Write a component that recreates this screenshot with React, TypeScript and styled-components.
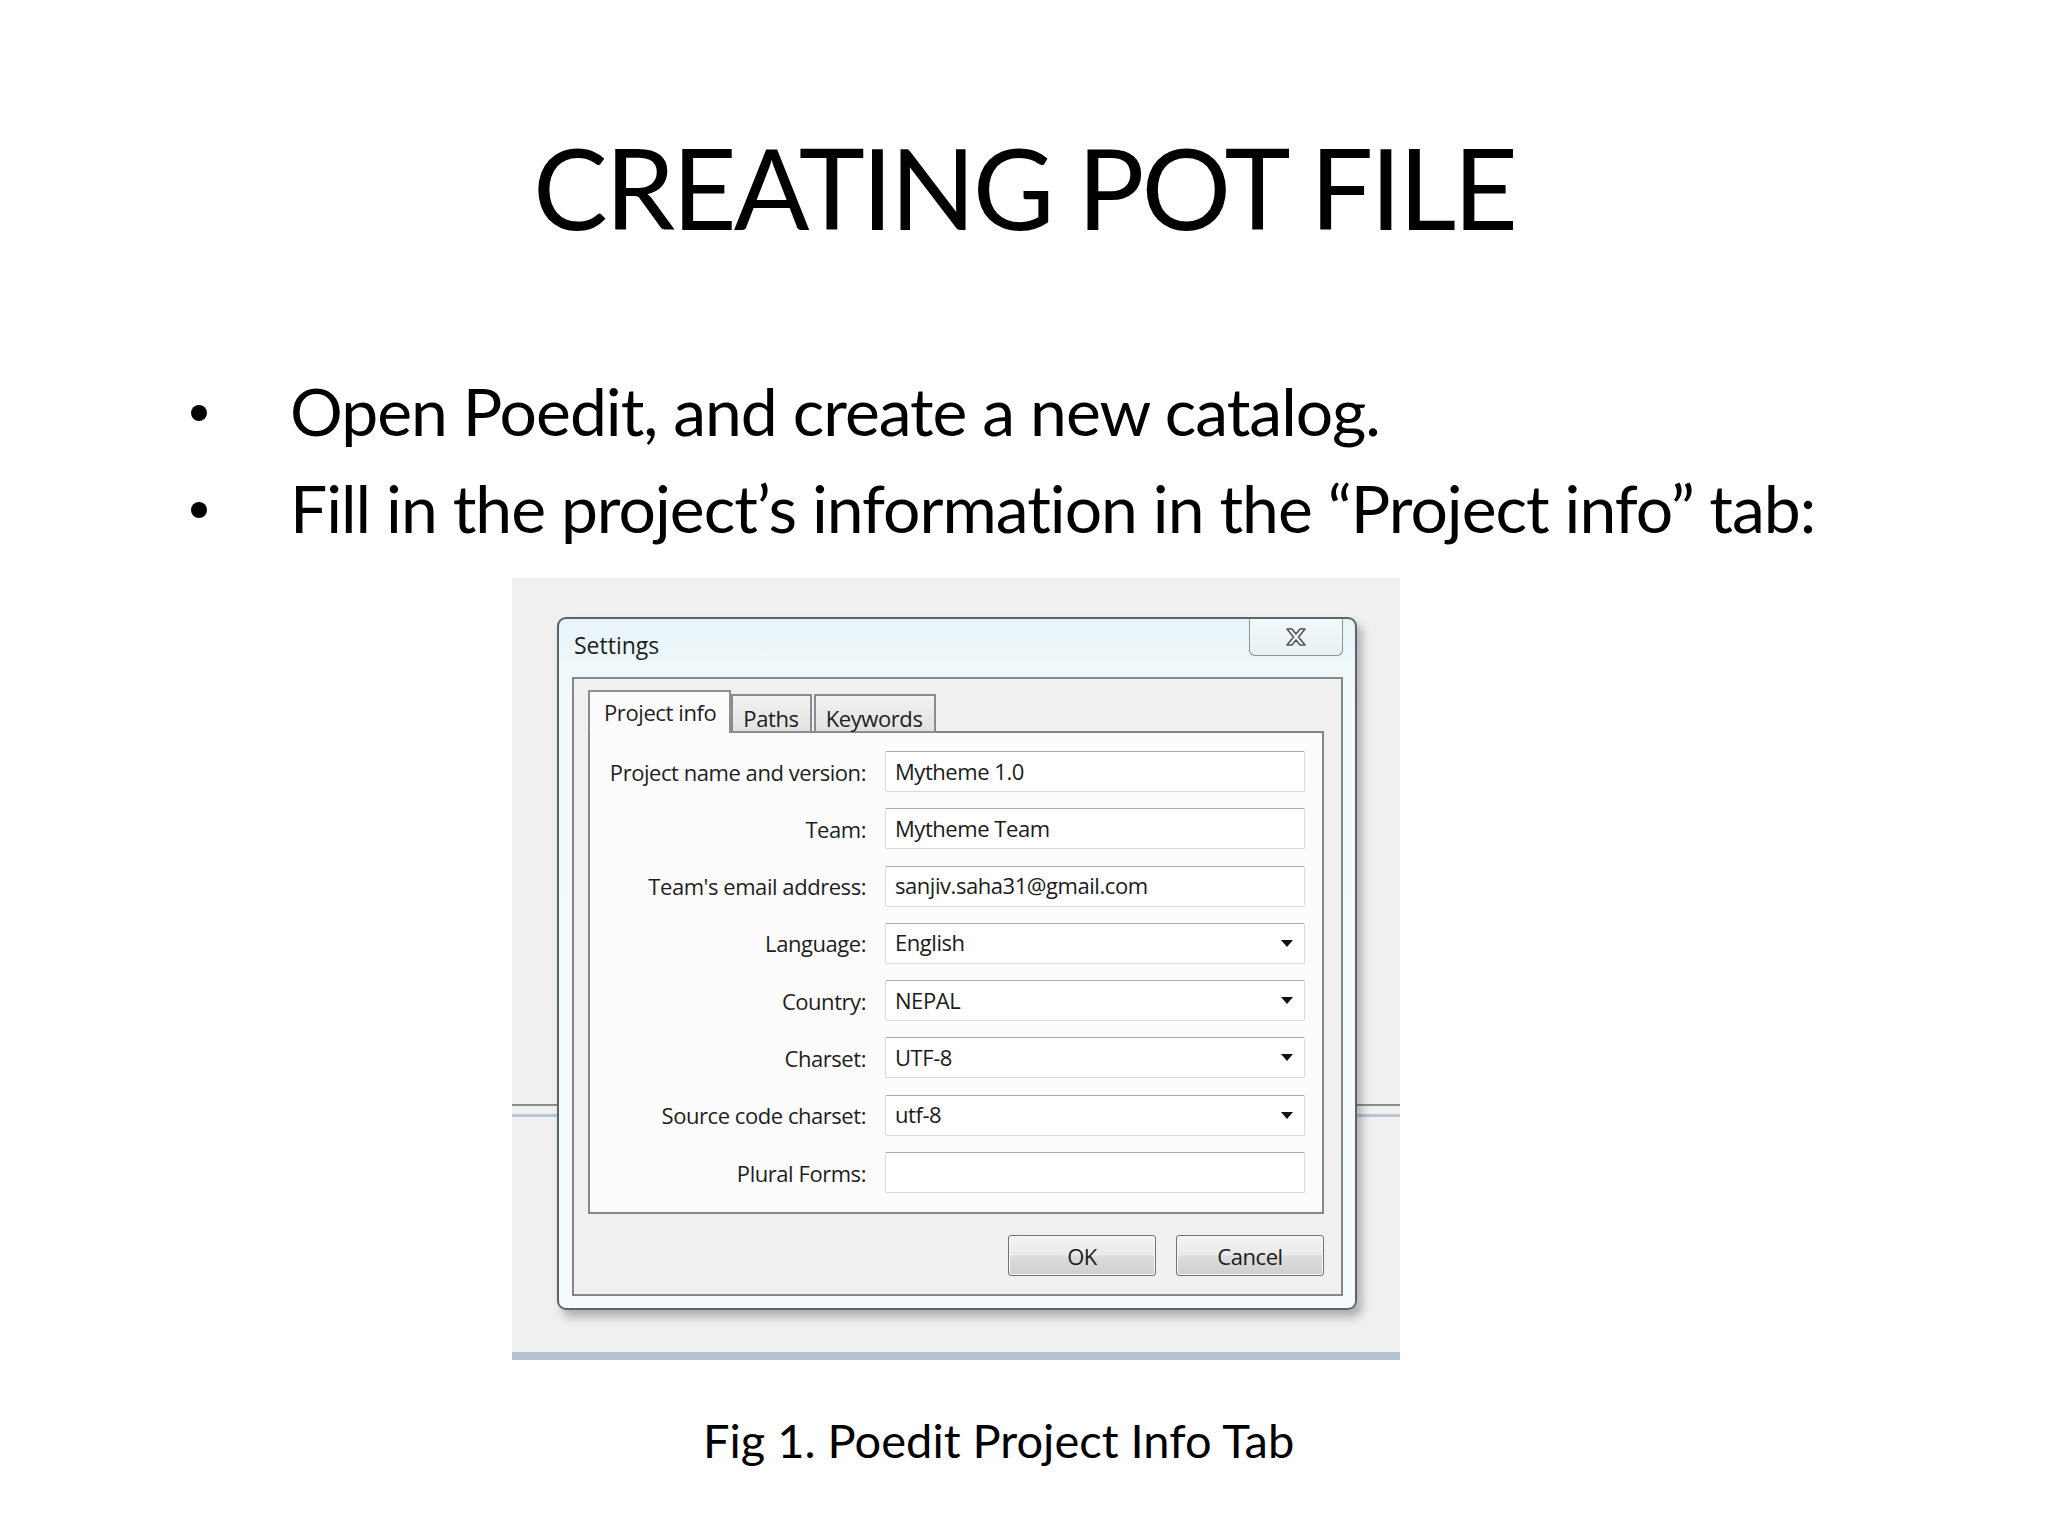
import React from "react";
import styled, { createGlobalStyle } from "styled-components";

const GlobalStyle = createGlobalStyle`
  html, body {
    margin: 0;
    padding: 0;
    background: #ffffff;
  }
  body {
    font-family: "Lato", "Open Sans", sans-serif;
    color: #000000;
  }
`;

type Field = {
  label: string;
  value: string;
  select?: boolean;
};

const fields: Field[] = [
  { label: "Project name and version:", value: "Mytheme 1.0" },
  { label: "Team:", value: "Mytheme Team" },
  { label: "Team's email address:", value: "sanjiv.saha31@gmail.com" },
  { label: "Language:", value: "English", select: true },
  { label: "Country:", value: "NEPAL", select: true },
  { label: "Charset:", value: "UTF-8", select: true },
  { label: "Source code charset:", value: "utf-8", select: true },
  { label: "Plural Forms:", value: "" },
];

const bullets = [
  "Open Poedit, and create a new catalog.",
  "Fill in the project\u2019s information in the \u201CProject info\u201D tab:",
];

const CloseGlyph = () => (
  <svg width="22" height="20" viewBox="0 0 22 20">
    <path
      d="M2 2 H7 L11 7 L15 2 H20 L13.5 10 L20 18 H15 L11 13 L7 18 H2 L8.5 10 Z"
      fill="#f4f4f4"
      stroke="#555"
      strokeWidth="1.6"
      strokeLinejoin="round"
    />
  </svg>
);

const App = () => {
  return (
    <>
      <GlobalStyle />
      <Slide>
        <Title>CREATING POT FILE</Title>
        <BulletList>
          {bullets.map((b) => (
            <BulletItem key={b}>
              <Dot />
              <span>{b}</span>
            </BulletItem>
          ))}
        </BulletList>

        <Figure>
          <Dialog>
            <TitleBar>
              <DialogTitle>Settings</DialogTitle>
              <CloseButton>
                <CloseGlyph />
              </CloseButton>
            </TitleBar>
            <Frame>
              <Tabs>
                <Tab $active>Project info</Tab>
                <Tab>Paths</Tab>
                <Tab>Keywords</Tab>
              </Tabs>
              <Panel>
                {fields.map((f) => (
                  <Row key={f.label}>
                    <Label>{f.label}</Label>
                    <Input>
                      <span>{f.value}</span>
                      {f.select && <Arrow />}
                    </Input>
                  </Row>
                ))}
              </Panel>
              <ButtonRow>
                <Button>OK</Button>
                <Button>Cancel</Button>
              </ButtonRow>
            </Frame>
          </Dialog>
        </Figure>

        <Caption>Fig 1. Poedit Project Info Tab</Caption>
      </Slide>
    </>
  );
};

export default App;

const Slide = styled.div`
  width: 2048px;
  height: 1536px;
  display: flex;
  flex-direction: column;
  overflow: hidden;
`;

const Title = styled.h1`
  margin: 131px 0 0;
  font-family: "Lato", sans-serif;
  font-weight: 400;
  font-size: 112px;
  line-height: 1;
  letter-spacing: -3px;
  text-align: center;
  color: #000;
`;

const BulletList = styled.ul`
  list-style: none;
  margin: 119px 0 0;
  padding: 0 0 0 190px;
`;

const BulletItem = styled.li`
  display: flex;
  align-items: center;
  height: 97px;
  font-size: 66px;
  line-height: 97px;
  letter-spacing: -1px;
  white-space: nowrap;
`;

const Dot = styled.span`
  width: 16px;
  height: 16px;
  border-radius: 50%;
  background: #000;
  margin: 4px 83px 0 1px;
  flex-shrink: 0;
`;

const Figure = styled.div`
  margin: 22px 0 0 512px;
  width: 888px;
  height: 782px;
  box-sizing: border-box;
  padding: 39px 0 0 45px;
  background: linear-gradient(
    to bottom,
    #f0f0f0 0px,
    #f0f0f0 526px,
    #8c8c8c 526px,
    #8c8c8c 528px,
    #f0f0f0 528px,
    #f0f0f0 536px,
    #b7c3d6 536px,
    #b7c3d6 539px,
    #f0f0f0 539px,
    #f0f0f0 774px,
    #b6c2d4 774px,
    #b6c2d4 782px
  );
`;

const Dialog = styled.div`
  width: 800px;
  height: 693px;
  box-sizing: border-box;
  border: 2px solid #5f6366;
  border-radius: 9px;
  padding: 0 12px 12px 13px;
  display: flex;
  flex-direction: column;
  background: linear-gradient(to bottom, #e8f4f8 0%, #f3fafc 12%, #f5fbfd 100%);
  box-shadow: 5px 7px 10px rgba(0, 0, 0, 0.28);
  font-family: "Open Sans", "Noto Sans", sans-serif;
  color: #1b1b1b;
`;

const TitleBar = styled.div`
  height: 58px;
  display: flex;
  justify-content: space-between;
  align-items: flex-start;
  flex-shrink: 0;
`;

const DialogTitle = styled.div`
  margin: 15px 0 0 2px;
  font-size: 23px;
  line-height: 1;
  color: #1e1e1e;
`;

const CloseButton = styled.div`
  width: 94px;
  height: 37px;
  box-sizing: border-box;
  border: 1px solid #8d9297;
  border-top: none;
  border-radius: 0 0 6px 6px;
  background: linear-gradient(to bottom, #f2f8fb, #e9f1f5);
  display: flex;
  align-items: center;
  justify-content: center;
`;

const Frame = styled.div`
  flex: 1;
  box-sizing: border-box;
  border: 2px solid #85888a;
  background: #f0f0f0;
  padding: 13px 17px 0 14px;
  display: flex;
  flex-direction: column;
`;

const Tabs = styled.div`
  display: flex;
  align-items: flex-end;
  height: 41px;
  position: relative;
  z-index: 1;
  margin-bottom: -2px;
`;

const Tab = styled.div<{ $active?: boolean }>`
  box-sizing: border-box;
  height: ${(p) => (p.$active ? "43px" : "39px")};
  padding: ${(p) => (p.$active ? "6px 13px 0 14px" : "8px 11px 0 10px")};
  margin-right: ${(p) => (p.$active ? "0" : "2px")};
  border: 2px solid #8a8d90;
  border-bottom: ${(p) => (p.$active ? "none" : "2px solid #8a8d90")};
  background: ${(p) =>
    p.$active ? "#fcfcfc" : "linear-gradient(to bottom, #f2f2f2, #e2e2e2)"};
  font-size: 22px;
  line-height: 28px;
  letter-spacing: -0.4px;
  color: #1e1e1e;
  white-space: nowrap;
`;

const Panel = styled.div`
  height: 483px;
  box-sizing: border-box;
  border: 2px solid #85888a;
  background: #fcfcfc;
  padding: 18px 17px 0 0;
  display: flex;
  flex-direction: column;
  gap: 16.3px;
`;

const Row = styled.div`
  display: flex;
  align-items: center;
  height: 41px;
`;

const Label = styled.div`
  width: 295px;
  padding-right: 19px;
  box-sizing: border-box;
  text-align: right;
  font-size: 22px;
  letter-spacing: -0.45px;
  color: #1e1e1e;
  white-space: nowrap;
`;

const Input = styled.div`
  width: 420px;
  height: 41px;
  box-sizing: border-box;
  border: 1px solid #dadada;
  border-top-color: #a9a9a9;
  border-radius: 2px;
  background: #ffffff;
  display: flex;
  align-items: center;
  justify-content: space-between;
  padding: 0 10px 2px 9px;
  font-size: 22px;
  letter-spacing: -0.45px;
  color: #1a1a1a;
  white-space: nowrap;
`;

const Arrow = styled.span`
  width: 0;
  height: 0;
  margin: 2px 1px 0 0;
  border-left: 6px solid transparent;
  border-right: 6px solid transparent;
  border-top: 7px solid #111;
`;

const ButtonRow = styled.div`
  display: flex;
  justify-content: flex-end;
  gap: 20px;
  margin-top: 21px;
`;

const Button = styled.div`
  width: 148px;
  height: 41px;
  box-sizing: border-box;
  border: 1px solid #707070;
  border-radius: 3px;
  background: linear-gradient(to bottom, #f2f2f2 0%, #ebebeb 48%, #dddddd 52%, #cfcfcf 100%);
  box-shadow: inset 0 0 0 1px #fbfbfb;
  display: flex;
  align-items: center;
  justify-content: center;
  font-size: 22px;
  letter-spacing: -0.45px;
  color: #1a1a1a;
`;

const Caption = styled.div`
  margin: 57px 0 0;
  padding-left: 703px;
  font-size: 47px;
  line-height: 1;
  color: #000;
`;
